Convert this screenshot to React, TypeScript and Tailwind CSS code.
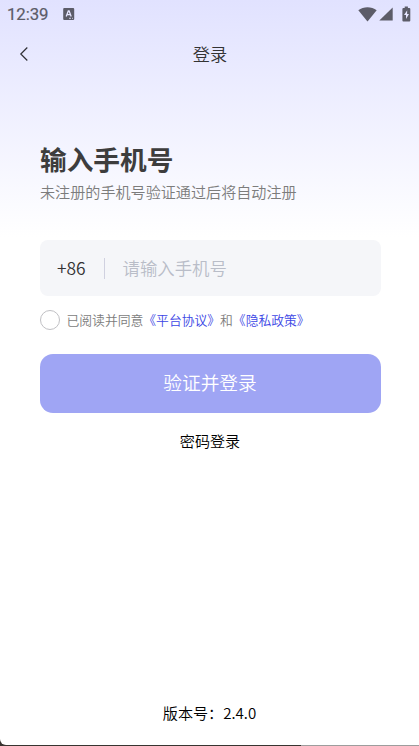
function StatusBar() {
  return (
    <div className="flex h-7 items-center pl-[7px] pr-[8px] text-[#5c5c68]">
      <span className="font-[Roboto,sans-serif] text-[16.8px] leading-7 font-normal tracking-[-0.1px] [-webkit-text-stroke:0.2px_#5c5c68]">12:39</span>
      <svg className="ml-[15px]" width="12" height="12" viewBox="0 0 12 12">
        <rect x="0.2" y="0" width="11" height="12" rx="1" fill="currentColor" />
        <path d="M3.2 8.5 5.3 3h.8l2.1 5.5M4.2 6.6h3" fill="none" stroke="#e6e6ff" strokeWidth="1.3" />
        <path d="M6 10.3h2M9 10.3h1" stroke="#e6e6ff" strokeWidth="0.8" />
      </svg>
      <div className="ml-auto flex items-center">
        <svg width="19" height="15" viewBox="0 0 19 15">
          <path d="M0.3 3.2C5.5-.9 13.5-.9 18.7 3.2L9.5 14.6Z" fill="currentColor" />
        </svg>
        <svg className="ml-[2px]" width="14" height="14" viewBox="0 0 14 14">
          <path d="M13.7 0.4V13.6H0.3Z" fill="currentColor" />
        </svg>
        <svg className="ml-[9px]" width="9" height="16" viewBox="0 0 9 16">
          <path d="M2.7 0.5h3.2v1.4h1.4q1 0 1 1v11.6q0 1-1 1H1.4q-1 0-1-1V2.9q0-1 1-1h1.3Z" fill="currentColor" />
          <path d="M5.2 4.2 2 9h2v4l3-5H5.1Z" fill="#e6e6ff" />
        </svg>
      </div>
    </div>
  );
}

export default function App() {
  return (
    <div className="flex h-[746px] w-[419px] flex-col overflow-hidden bg-[#383430] font-['Noto_Sans_CJK_SC',sans-serif] font-[350]">
      <main className="flex h-[745px] shrink-0 flex-col rounded-bl-[6px] bg-white bg-[linear-gradient(to_bottom,#e1e2ff_0px,#fff_237px)]">
        <StatusBar />
        <header className="grid h-[52px] grid-cols-[80px_1fr_79px] items-center">
          <button aria-label="返回" className="pl-[19px]">
            <svg width="10" height="16" viewBox="0 0 10 16">
              <path d="M8.3 1.5 1.8 8l6.5 6.5" fill="none" stroke="#303036" strokeWidth="1.2" />
            </svg>
          </button>
          <h1 className="text-center text-[17.2px] leading-6 font-[350] text-[#333]">登录</h1>
        </header>

        <section className="flex flex-col pt-[59px] pr-[38.5px] pl-[39.5px]">
          <h2 className="h-10 pl-[0.5px] text-[26.7px] leading-10 font-bold text-[#3d3d3d]">输入手机号</h2>
          <p className="h-6 pl-[0.5px] text-[15.1px] leading-6 whitespace-nowrap text-[#7c7c7c]">未注册的手机号验证通过后将自动注册</p>

          <div className="mt-[37px] flex h-14 items-center rounded-[8px] bg-[#f5f6f9] pl-[17.5px]">
            <span className="w-[46.5px] text-[17.4px] text-[#333]">+86</span>
            <span className="h-[21px] w-px bg-[#d0d1e0]" />
            <span className="ml-[18px] text-[17.4px] text-[#b9bdc8]">请输入手机号</span>
          </div>

          <div className="mt-[14px] flex h-5 items-center">
            <span className="size-5 rounded-full border border-[#c0c0c4] bg-white" />
            <p className="ml-[7px] text-[12.8px] leading-5 whitespace-nowrap text-[#7c7c7c]">
              已阅读并同意<span className="text-[#3c46e5]">《平台协议》</span>和<span className="text-[#3c46e5]">《隐私政策》</span>
            </p>
          </div>

          <button className="mt-6 h-[59px] rounded-[13px] bg-[#9fa5f4] pb-[2px] text-[18.7px] text-white">验证并登录</button>
          <button className="mt-[15px] h-6 text-[15.1px] leading-6 text-black">密码登录</button>
        </section>

        <footer className="mt-auto mb-[21px] text-center text-[15.1px] leading-6 text-black">版本号：2.4.0</footer>
      </main>
      <div className="ml-[301px] h-px shrink-0 bg-[#9d9d9d]" />
    </div>
  );
}
